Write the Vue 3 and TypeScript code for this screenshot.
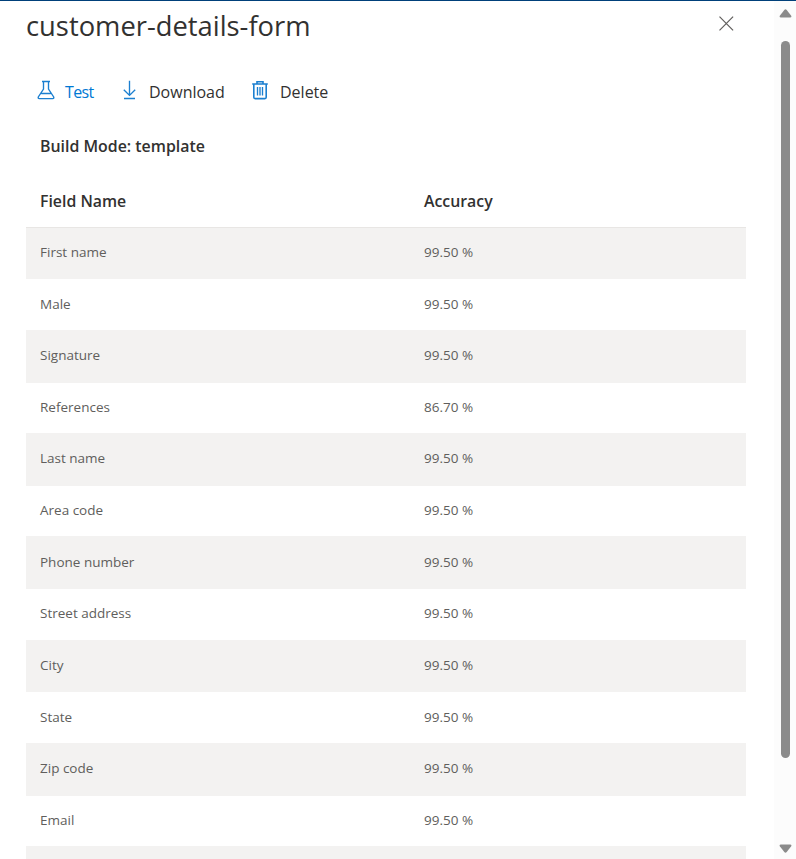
<script setup lang="ts">
interface FieldRow {
  name: string
  accuracy: number
}

const fields: FieldRow[] = [
  { name: 'First name', accuracy: 99.5 },
  { name: 'Male', accuracy: 99.5 },
  { name: 'Signature', accuracy: 99.5 },
  { name: 'References', accuracy: 86.7 },
  { name: 'Last name', accuracy: 99.5 },
  { name: 'Area code', accuracy: 99.5 },
  { name: 'Phone number', accuracy: 99.5 },
  { name: 'Street address', accuracy: 99.5 },
  { name: 'City', accuracy: 99.5 },
  { name: 'State', accuracy: 99.5 },
  { name: 'Zip code', accuracy: 99.5 },
  { name: 'Email', accuracy: 99.5 },
  { name: '', accuracy: 0 },
]
</script>

<template>
  <div class="window">
    <main class="panel">
      <header class="header">
        <h1 class="title">customer-details-form</h1>
        <button class="close" aria-label="Close">
          <svg width="16" height="16" viewBox="0 0 16 16"><path d="M1.5 .7 15.1 14.3M15.1 .7 1.5 14.3" /></svg>
        </button>
      </header>

      <div class="toolbar">
        <button class="action test">
          <svg width="18" height="20" viewBox="0 0 18 20">
            <path d="M5 1.5H13M6.5 1.5V9L1.3 17Q.8 18.6 2.2 18.6H15.8Q17.2 18.6 16.7 17L11.5 9V1.5M4.3 13.5H13.7" />
          </svg>
          <span class="label">Test</span>
        </button>
        <button class="action download">
          <svg width="14" height="20" viewBox="0 0 14 20">
            <path d="M7.5 .8V15.2M1.8 9.7 7.5 15.4 13.2 9.7M2 18.5H13" />
          </svg>
          <span class="label">Download</span>
        </button>
        <button class="action delete">
          <svg width="18" height="20" viewBox="0 0 18 20">
            <path class="can" d="M1.2 4H16.8M6 3.8V1.8H12V3.8M2.8 4V17.3Q2.8 18.6 4.1 18.6H13.9Q15.2 18.6 15.2 17.3V4" />
            <path d="M6.5 7V15.5M9 7V15.5M11.5 7V15.5" />
          </svg>
          <span class="label">Delete</span>
        </button>
      </div>

      <p class="mode">Build Mode: template</p>

      <div class="grid">
        <div class="head">
          <span class="h-name">Field Name</span>
          <span class="h-accuracy">Accuracy</span>
        </div>
        <div v-for="(field, i) in fields" :key="i" class="row">
          <span class="name">{{ field.name }}</span>
          <span v-if="field.name" class="value">{{ field.accuracy.toFixed(2) }} %</span>
        </div>
      </div>
    </main>

    <aside class="scrollbar">
      <svg width="13" height="9" viewBox="0 0 13 9"><path d="M5.3 1Q6.5-.4 7.7 1L12.2 6.7Q13 8.5 11 8.5H2Q0 8.5.8 6.7Z" /></svg>
      <div class="thumb"></div>
      <svg width="13" height="9" viewBox="0 0 13 9"><path d="M5.3 8Q6.5 9.4 7.7 8L12.2 2.3Q13 .5 11 .5H2Q0 .5.8 2.3Z" /></svg>
    </aside>
  </div>
</template>

<style>
body {
  margin: 0;
  overflow: hidden;
}
</style>

<style scoped>
.window {
  box-sizing: border-box;
  display: flex;
  height: 859px;
  overflow: hidden;
  border-top: 1px solid #00407a;
  background: #fff;
  color: #323130;
  font-family: 'Segoe UI', 'Open Sans', 'Noto Sans', sans-serif;
}
.panel {
  flex: 1;
  min-width: 0;
  padding: 0 28px 0 26px;
}
.header {
  display: flex;
  justify-content: space-between;
  height: 70px;
}
.title {
  margin: 5px 0 0;
  font-size: 27.35px;
  line-height: 40px;
  font-weight: 400;
  white-space: nowrap;
}
button {
  padding: 0;
  border: 0;
  background: none;
  color: inherit;
  font: inherit;
}
svg {
  display: block;
  flex: none;
}
.close {
  height: 16px;
  margin: 15px 12px 0 0;
}
.close path {
  fill: none;
  stroke: #605e5c;
  stroke-width: 1.2;
}
.toolbar {
  display: flex;
  height: 40px;
  padding-left: 11px;
}
.action {
  display: flex;
  align-items: center;
  height: 40px;
  font-size: 16px;
  white-space: nowrap;
}
.action svg {
  margin-bottom: 2px;
}
.action path {
  fill: none;
  stroke: #1b7fd0;
  stroke-width: 1.35;
}
.action .can {
  stroke-width: 1.6;
}
.label {
  padding-top: 2px;
}
.test {
  width: 85px;
  gap: 10px;
  color: #0078d4;
  letter-spacing: -0.6px;
}
.download {
  width: 129px;
  gap: 13px;
}
.delete {
  gap: 11px;
}
.mode {
  margin: 23px 0 0 14px;
  font-size: 15.9px;
  line-height: 24px;
  font-weight: 600;
}
.grid {
  margin-top: 17px;
}
.head,
.row {
  display: grid;
  grid-template-columns: 384px 1fr;
  align-items: center;
  padding-left: 14px;
}
.head {
  height: 51.8px;
  font-size: 15.85px;
  font-weight: 600;
}
.row {
  box-sizing: border-box;
  height: 51.62px;
  padding-bottom: 1.1px;
  color: #605e5c;
  font-size: 13.5px;
}
.row:nth-child(even) {
  background: #f3f2f1;
  box-shadow: 0 1px #f3f2f1;
}
.row:nth-child(2) {
  box-shadow: 0 1px #f3f2f1, inset 0 1px #e8e6e4;
}
.scrollbar {
  display: flex;
  flex-direction: column;
  align-items: center;
  box-sizing: border-box;
  width: 22px;
  padding: 8px 0 5px 1px;
  background: #fcfcfc;
}
.scrollbar path {
  fill: #8b8b8b;
}
.thumb {
  width: 9px;
  height: 717px;
  margin: 23px 0 86px;
  border-radius: 5px;
  background: #8b8b8b;
}
</style>
